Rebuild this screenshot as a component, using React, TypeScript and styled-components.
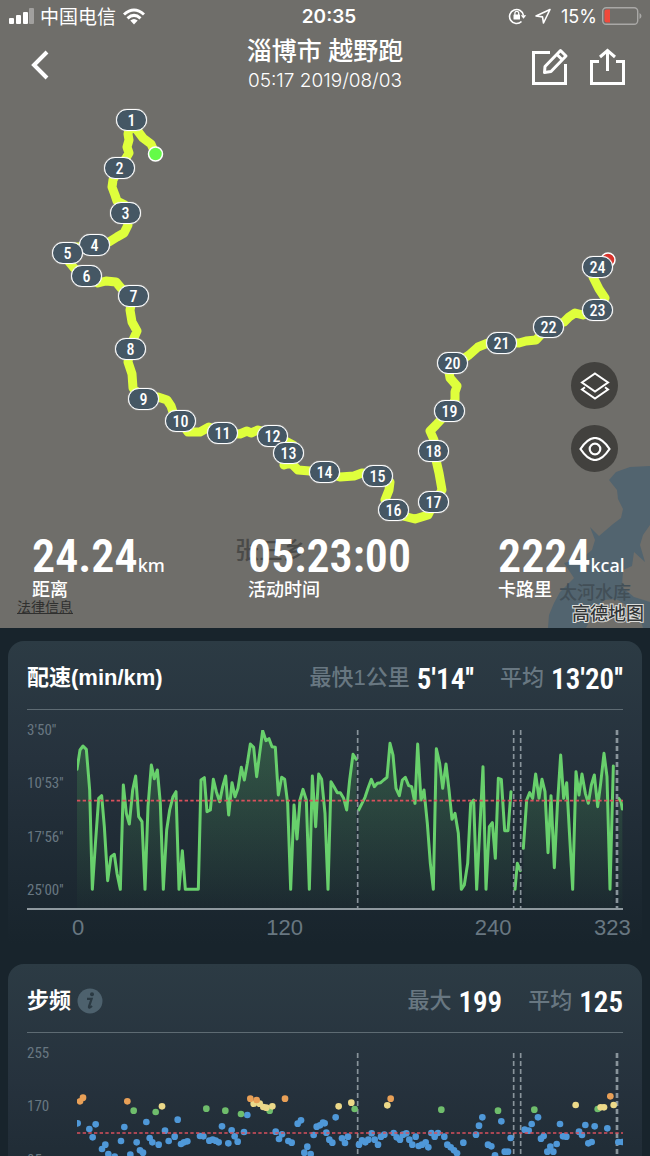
import React from 'react';
import styled, { createGlobalStyle } from 'styled-components';

const sans = `"Liberation Sans", "Noto Sans CJK SC", sans-serif`;
const ui = `Inter, "Noto Sans CJK SC", sans-serif`;
const digits = `"Roboto Condensed", Roboto, "Noto Sans CJK SC", sans-serif`;

const GlobalStyle = createGlobalStyle`
  * { box-sizing: border-box; }
  body { margin: 0; background: #18242c; }
  button { border: 0; padding: 0; background: none; color: inherit; font: inherit; cursor: pointer; }
`;

const Screen = styled.main`
  height: 100vh;
  overflow-y: auto;
  scrollbar-width: none;
  background: #18242c;
  color: #fff;
  font-family: ${ui};
`;

const MapSection = styled.section`
  position: relative;
  display: flex;
  flex-direction: column;
  min-height: 628px;
  overflow: hidden;
  background: #6f6e6a;
`;

const MapCanvas = styled.div`
  position: absolute;
  top: 0;
  left: 50%;
  width: 650px;
  height: 628px;
  margin-left: -325px;
`;

const MapDrawing = styled.svg`
  display: block;
  width: 100%;
  height: 100%;
`;

const Pin = styled.span<{ $x: number; $y: number }>`
  position: absolute;
  left: ${(p) => p.$x - 15}px;
  top: ${(p) => p.$y - 11}px;
  width: 31px;
  height: 22px;
  border: 1px solid #fff;
  border-radius: 11px;
  background: #455764;
  box-shadow: 0 0 1px #fff;
  text-align: center;
  font: 500 16px/21px ${digits};
`;

const Place = styled.span<{ $x: number; $y: number; $size: number; $color: string }>`
  position: absolute;
  left: ${(p) => p.$x}px;
  top: ${(p) => p.$y}px;
  color: ${(p) => p.$color};
  font-size: ${(p) => p.$size}px;
  line-height: 24px;
  font-weight: 500;
`;

const Foreground = styled.div`
  position: relative;
  display: flex;
  flex: 1;
  flex-direction: column;
`;

const StatusBar = styled.div`
  display: grid;
  grid-template-columns: 1fr auto 1fr;
  align-items: center;
  height: 32px;
  padding: 0 8px 0 9px;
  font-size: 18px;
`;

const StatusGroup = styled.div<{ $end?: boolean }>`
  display: flex;
  align-items: center;
  justify-content: ${(p) => (p.$end ? 'flex-end' : 'flex-start')};
  gap: ${(p) => (p.$end ? 5 : 6)}px;
`;

const Carrier = styled.span`
  padding-top: 3px;
  font-size: 19px;
  line-height: 24px;
`;

const Clock = styled.time`
  padding-left: 7px;
  font-size: 19px;
  font-weight: 600;
`;

const NavBar = styled.header`
  display: grid;
  grid-template-columns: 1fr auto 1fr;
  align-items: center;
  height: 66px;
  padding: 0 25px;
`;

const NavActions = styled.div`
  display: flex;
  justify-content: flex-end;
  gap: 20px;
  padding-top: 4px;
`;

const IconButton = styled.button`
  display: flex;
  justify-self: start;
  svg { display: block; }
`;

const Heading = styled.div`
  text-align: center;
`;

const Title = styled.h1`
  margin: 0;
  font-size: 25px;
  line-height: 32px;
  font-weight: 500;
`;

const Subtitle = styled.p`
  margin: 0;
  font-size: 19px;
  line-height: 28px;
  font-weight: 300;
`;

const MapControls = styled.div`
  display: flex;
  flex-direction: column;
  align-self: flex-end;
  gap: 16px;
  margin: auto 32px 60px 0;
`;

const RoundButton = styled.button`
  display: flex;
  align-items: center;
  justify-content: center;
  width: 47px;
  height: 47px;
  border-radius: 50%;
  background: #42413e;
`;

const Stats = styled.dl`
  display: grid;
  grid-template-columns: 216fr 250fr 152fr;
  margin: 0;
  padding-left: 32px;
`;

const Stat = styled.div`
  display: flex;
  flex-direction: column-reverse;
`;

const StatValue = styled.dd`
  margin: 0;
  white-space: nowrap;
  font: 600 46px/48px ${digits};
`;

const StatUnit = styled.small`
  font: 500 18px/20px "Noto Sans", sans-serif;
`;

const StatLabel = styled.dt`
  font-size: 18px;
  line-height: 20px;
  font-weight: 500;
`;

const MapFooter = styled.footer`
  display: flex;
  justify-content: space-between;
  height: 28px;
  padding: 0 6px 0 17px;
`;

const LegalLink = styled.a`
  color: #30302f;
  font-size: 14px;
  line-height: 14px;
`;

const MapBrand = styled.span`
  align-self: flex-end;
  color: #333637;
  font-size: 18px;
  line-height: 28px;
  font-weight: 500;
  -webkit-text-stroke: 2px #dededc;
  paint-order: stroke fill;
`;

const Cards = styled.div`
  display: flex;
  flex-direction: column;
  gap: 13px;
  padding: 13px 8px;
`;

const Card = styled.section`
  padding: 0 19px;
  height: 310px;
  border-radius: 16px;
  background: linear-gradient(#2c3b44, #26323d 38%, #18242c 98%);
`;

const CardHeader = styled.header`
  display: flex;
  align-items: center;
  height: 69px;
  padding-top: 5px;
  border-bottom: 1px solid #5e6b73;
`;

const CardTitle = styled.h2`
  margin: 0;
  font: bold 22px/32px ${sans};
`;

const InfoButton = styled.button`
  display: flex;
  margin-left: 6px;
`;

const Metrics = styled.dl`
  display: flex;
  gap: 26px;
  margin: 0 0 0 auto;
`;

const Metric = styled.div`
  display: flex;
  align-items: center;
  gap: 7px;
`;

const MetricLabel = styled.dt`
  color: #687781;
  font: 500 22px/32px ${sans};
`;

const MetricValue = styled.dd`
  margin: 0;
  padding-top: 2px;
  font: 600 29px/32px ${digits};
`;

const ChartBody = styled.div`
  display: flex;
  padding-top: 20px;
  border-bottom: 2px solid #8f999f;
`;

const YAxis = styled.div`
  display: flex;
  flex-direction: column;
  justify-content: space-between;
  width: 50px;
  height: 180px;
  margin-top: -10px;
  color: #687781;
  font: 15px/20px ${digits};
`;

const Plot = styled.svg`
  display: block;
  flex: 1;
  min-width: 0;
  height: 178px;
`;

const XAxis = styled.div`
  display: grid;
  grid-template-columns: 194fr 208fr 119fr 37px;
  margin-right: -8px;
  padding-left: 45px;
  color: #687781;
  font: 22px/36px ${sans};
`;

const pins: [number, number][] = [
  [131, 120], [119, 168], [125, 213], [94, 245], [67, 253], [86, 276], [133, 296], [130, 349],
  [143, 399], [180, 421], [222, 433], [272, 436], [288, 453], [324, 472], [377, 476], [393, 510],
  [433, 502], [433, 451], [449, 411], [452, 363], [501, 343], [548, 327], [597, 310], [597, 267],
];

const route =
  'M155 153 L151 144 L143 138 L137 130 L130 125 L128 134 L129 140 L127 147 L129 153 L126 158 L119 168 ' +
  'L113 180 L112 187 L115 195 L117 201 L125 205 L125 213 L128 225 L124 233 L117 237 L109 242 L94 246 L60 248 L66 258 L74 268 L86 276 ' +
  'L98 283 L106 281 L116 282 L121 288 L133 296 L130 310 L132 322 L137 331 L133 340 L130 349 ' +
  'L128 362 L132 374 L133 388 L143 399 L158 397 L167 400 L171 406 L173 412 L180 421 L188 432 L200 432 L209 427 ' +
  'L222 433 L240 434 L247 431 L251 433 L258 430 L272 434 L293 445 L288 453 L284 465 L291 463 L298 470 L310 471 L324 472 L340 477 L354 476 ' +
  'L362 473 L377 474 L390 482 L389 490 L385 500 L393 510 L403 516 L415 519 L428 515 L434 503 ' +
  'L442 490 L439 473 L436 460 L433 451 L434 440 L430 431 L436 425 L449 411 L455 400 L455 392 L457 386 L450 378 L449 372 ' +
  'L457 363 L469 355 L478 347 L488 343 L501 342 L519 343 L526 341 L536 340 L548 327 L564 322 L569 317 L575 313 L583 315 L597 311 ' +
  'L605 298 L599 289 L593 277 L597 267';

type Segment = { shift: number; points: string };

const paceSegments: Segment[] = [
  {
    shift: 0,
    points:
      '232,388 241,330 250,318 260,328 270,450 278,748 288,600 297,475 306,467 314,560 324,722 334,650 344,643 352,700 362,748 371,435 380,520 389,552 399,450 408,408 417,530 427,545 436,748 445,500 455,375 464,416 473,390 482,490 491,748 501,570 510,510 520,470 529,455 538,748 548,632 557,748 596,748 604,420 614,413 622,515 632,510 641,418 650,455 660,485 669,440 678,408 687,525 697,428 706,470 715,445 725,382 734,420 743,370 752,312 762,322 771,410 780,340 789,272 799,302 808,296 817,320 827,322 836,465 846,412 855,418 864,490 873,748 883,495 892,597 901,480 910,448 920,480 929,748 938,408 948,560 957,402 966,418 976,520 985,748 994,425 1003,440 1013,458 1022,458 1032,475 1041,510 1050,420 1060,343 1070,358',
  },
  {
    shift: 975,
    points:
      '102,510 112,490 121,472 130,445 140,418 149,440 158,430 168,428 177,420 187,412 196,310 205,345 214,445 224,467 233,420 242,412 252,437 261,440 271,490 279,312 289,480 298,450 308,550 317,670 326,748 335,326 345,370 354,445 364,372 373,450 382,538 391,520 401,580 410,748 419,735 429,670 438,490 447,480 456,748 475,380 484,748 494,560 503,548 512,655 521,415 530,418 540,572 550,572 559,455',
  },
  { shift: 975, points: '571,748 578,670 587,692' },
  {
    shift: 975,
    points:
      '596,625 606,480 615,458 624,475 633,402 643,475 652,418 661,455 670,638 679,467 689,683 698,500 708,345 717,475 726,428 735,590 744,748 754,395 763,465 772,402 782,460 791,490 800,435 809,405 819,500 828,430 838,340 847,410 856,748 866,378',
  },
  { shift: 975, points: '882,475 889,485 893,507' },
];

type DotSet = { color: string; left: string; right: string };

const cadenceDots: DotSet[] = [
  {
    color: '#4f98d8',
    left: '234,492 269,509 279,534 288,495 307,569 317,556 326,584 345,592 364,545 374,503 392,586 411,549 421,573 430,580 440,488 450,536 458,549 477,556 496,514 507,545 525,532 534,481 544,554 553,549 563,546 601,530 611,531 629,544 639,541 648,544 657,549 667,501 686,552 696,513 705,531 714,547 733,518 743,467 828,517 838,539 847,525 866,545 876,550 894,493 904,483 914,580 923,562 933,584 942,527 951,502 961,498 970,490',
    right: '0,492 5,520 14,541 23,550 33,474 52,537 61,551 70,532 103,556 112,543 122,549 131,541 141,522 150,541 160,556 169,532 179,526 207,521 216,534 226,541 235,526 245,522 254,541 263,556 273,532 282,560 292,556 303,549 311,564 320,521 330,532 340,521 359,532 368,556 378,564 388,573 397,582 416,550 454,526 463,499 473,474 490,556 500,561 511,588 530,486 540,577 550,577 558,536 600,511 612,514 621,494 640,474 649,538 657,530 668,577 677,562 686,577 696,554 706,494 715,531 725,532 763,517 772,527 782,497 791,552 801,548 810,501 848,507 881,548 893,548',
  },
  {
    color: '#6fbd6c',
    left: '402,454 468,458 620,448 677,454 724,464 810,454',
    right: '90,449 350,451 520,454 629,451 819,449',
  },
  {
    color: '#ecd989',
    left: '487,441 762,433 780,433 791,443 800,445 818,441',
    right: '42,441 80,430 188,438 753,437 828,444 838,444 867,437',
  },
  {
    color: '#e9a057',
    left: '241,426 250,415 383,426 752,418 771,422 856,418',
    right: '198,418 857,411',
  },
];

const pauses = [
  { x: 1074, width: 5 },
  { x: 1542, width: 5 },
  { x: 1563, width: 5 },
  { x: 1852, width: 8 },
];

const toPairs = (text: string, shift = 0) =>
  text.split(' ').map((pair) => {
    const [x, y] = pair.split(',').map(Number);
    return [x + shift, y] as [number, number];
  });

function PauseLines({ top }: { top: number }) {
  return (
    <>
      {pauses.map((p) => (
        <path key={p.x} d={`M${p.x} ${top}v534`} stroke="#89949b" strokeWidth={p.width} strokeDasharray="15 9" />
      ))}
    </>
  );
}

function Average({ y }: { y: number }) {
  return <path d={`M232 ${y}H1870`} stroke="#d9505c" strokeWidth="5" strokeDasharray="10 7" />;
}

function PacePlot() {
  return (
    <Plot viewBox="232 270 1638 534" preserveAspectRatio="none" role="img" aria-label="配速">
      <defs>
        <linearGradient id="pace" x1="0" y1="270" x2="0" y2="804" gradientUnits="userSpaceOnUse">
          <stop offset="0" stopColor="#4fae57" stopOpacity="0.3" />
          <stop offset="1" stopColor="#4fae57" stopOpacity="0.02" />
        </linearGradient>
      </defs>
      {paceSegments.map((s) => {
        const pts = toPairs(s.points, s.shift);
        const line = pts.map((p) => p.join(' ')).join('L');
        return (
          <g key={line}>
            <path d={`M${pts[0][0]} 804L${line}L${pts[pts.length - 1][0]} 804Z`} fill="url(#pace)" />
            <path d={`M${line}`} fill="none" stroke="#68d06c" strokeWidth="9" strokeLinejoin="round" strokeLinecap="round" />
          </g>
        );
      })}
      <PauseLines top={270} />
      <Average y={482} />
    </Plot>
  );
}

function CadencePlot() {
  return (
    <Plot viewBox="232 281 1638 534" preserveAspectRatio="none" role="img" aria-label="步频">
      <PauseLines top={281} />
      {cadenceDots.map((set) => (
        <g key={set.color} fill={set.color}>
          {[...toPairs(set.left), ...toPairs(set.right, 975)].map(([x, y]) => (
            <circle key={`${x}-${y}`} cx={x} cy={y} r="10" />
          ))}
        </g>
      ))}
      <Average y={521} />
    </Plot>
  );
}

type ChartCardProps = {
  title: string;
  info?: boolean;
  metrics: [string, string][];
  scale: string[];
  children: React.ReactNode;
};

function ChartCard({ title, info, metrics, scale, children }: ChartCardProps) {
  return (
    <Card>
      <CardHeader>
        <CardTitle>{title}</CardTitle>
        {info && (
          <InfoButton aria-label="说明">
            <svg width="26" height="26" viewBox="0 0 26 26">
              <circle cx="13" cy="13" r="12.5" fill="#4d616d" />
              <circle cx="15" cy="6.2" r="2" fill="#2a3942" />
              <path d="M10 10.800h4.600l-2.600 7.800q-.4 2.400 3-.6" fill="none" stroke="#2a3942" strokeWidth="2.200" />
            </svg>
          </InfoButton>
        )}
        <Metrics>
          {metrics.map(([label, value]) => (
            <Metric key={label}>
              <MetricLabel>{label}</MetricLabel>
              <MetricValue>{value}</MetricValue>
            </Metric>
          ))}
        </Metrics>
      </CardHeader>
      <ChartBody>
        <YAxis>
          {scale.map((s) => (
            <span key={s}>{s}</span>
          ))}
        </YAxis>
        {children}
      </ChartBody>
      <XAxis>
        {['0', '120', '240', '323'].map((s) => (
          <span key={s}>{s}</span>
        ))}
      </XAxis>
    </Card>
  );
}

export default function App() {
  return (
    <>
      <GlobalStyle />
      <Screen>
        <MapSection>
          <MapCanvas>
            <MapDrawing viewBox="0 0 650 628">
              <path
                d="M650 466 L630 467 L616 472 L609 480 L617 490 L618 499 L623 509 L621 518 L613 524 L599 536 L590 527 L595 540 L592 550 L582 558 L564 563 L574 578 L560 592 L554 603 L549 615 L548 628 H586 L594 612 L604 600 L616 599 L628 606 L640 617 L643 628 H650 V602 L634 597 L622 587 L623 570 L632 566 L634 552 L645 562 L640 545 L643 535 L650 525 Z"
                fill="#52646f"
              />
              <path d={route} fill="none" stroke="#dfff3c" strokeWidth="9" strokeLinejoin="round" strokeLinecap="round" />
              <circle cx="155.500" cy="154" r="7" fill="#64fb48" stroke="#fff" strokeWidth="1.500" />
              <circle cx="608" cy="260" r="7" fill="#d8332c" stroke="#fff" strokeWidth="1.500" />
            </MapDrawing>
            <Place $x={235} $y={539} $size={24} $color="#4a4a48">张三乡</Place>
            <Place $x={559} $y={581} $size={18} $color="#424f57">太河水库</Place>
            {pins.map(([x, y], i) => (
              <Pin key={i} $x={x} $y={y}>{i + 1}</Pin>
            ))}
          </MapCanvas>
          <Foreground>
            <StatusBar>
              <StatusGroup>
                <svg width="25" height="16" viewBox="0 0 25 16" fill="#fff">
                  <rect x="0" y="10" width="5" height="6" rx="1" />
                  <rect x="7" y="7" width="5" height="9" rx="1" />
                  <rect x="14" y="4" width="5" height="12" rx="1" />
                  <rect x="20" y="0" width="5" height="16" rx="1" opacity="0.35" />
                </svg>
                <Carrier>中国电信</Carrier>
                <svg width="24" height="17" viewBox="0 0 24 17" fill="none" stroke="#fff" strokeWidth="3">
                  <path d="M2 6.500Q12-2.500 22 6.500M5.500 10.300Q12 4.500 18.500 10.300" />
                  <path d="M12 16.500L8.300 12.600Q12 9.500 15.700 12.600Z" fill="#fff" stroke="none" />
                </svg>
              </StatusGroup>
              <Clock>20:35</Clock>
              <StatusGroup $end>
                <svg width="19" height="18" viewBox="0 0 19 18" fill="none" stroke="#fff" strokeWidth="1.600">
                  <path d="M13.500 14.500A7 7 0 1 1 15.500 8.500" />
                  <path d="M12.800 8.200h5.400l-2.700 3.600z" fill="#fff" stroke="none" />
                  <rect x="5.500" y="7.500" width="6.500" height="5" rx="0.500" fill="#fff" stroke="none" />
                  <path d="M6.900 8V6.300a1.900 1.900 0 0 1 3.800 0V8" strokeWidth="1.300" />
                </svg>
                <svg width="24" height="16" viewBox="0 0 24 16" fill="none" stroke="#fff" strokeWidth="1.600" strokeLinejoin="round">
                  <path d="M18 1.500L4 8l6.500 .900L11.500 15z" />
                </svg>
                <span>15%</span>
                <svg width="40" height="18" viewBox="0 0 40 18">
                  <rect x="0.700" y="0.700" width="35" height="16.600" rx="3.500" fill="none" stroke="#a9a8a6" strokeWidth="1.400" />
                  <path d="M4.500 2.500H8v13H4.500Q2.500 15.500 2.500 13.500v-9Q2.500 2.500 4.500 2.500Z" fill="#f0493b" />
                  <path d="M37.500 6v6q2-1 2-3t-2-3z" fill="#a9a8a6" />
                </svg>
              </StatusGroup>
            </StatusBar>
            <NavBar>
              <IconButton aria-label="返回">
                <svg width="27" height="30" viewBox="0 0 27 30" fill="none" stroke="#fff" strokeWidth="4">
                  <path d="M22 2L9 15l13 13" />
                </svg>
              </IconButton>
              <Heading>
                <Title>淄博市 越野跑</Title>
                <Subtitle>05:17 2019/08/03</Subtitle>
              </Heading>
              <NavActions>
                <IconButton aria-label="编辑">
                  <svg width="38" height="38" viewBox="0 0 38 38" fill="none" stroke="#fff" strokeWidth="3">
                    <path d="M19 4.500H2.500V35.500H34.500V16" />
                    <path d="M14 18.500L29.500 2.500l5.500 5.500L20 23.500l-6.500 1zM26 6.500l5.500 5.500" strokeLinejoin="round" />
                  </svg>
                </IconButton>
                <IconButton aria-label="分享">
                  <svg width="36" height="38" viewBox="0 0 36 38" fill="none" stroke="#fff" strokeWidth="3">
                    <path d="M10 13.500H2.500V35.500H34.500V13.500H27" />
                    <path d="M18.500 23V3M11 9L18.500 2.500l7.500 6.500" />
                  </svg>
                </IconButton>
              </NavActions>
            </NavBar>
            <MapControls>
              <RoundButton aria-label="图层">
                <svg width="30" height="28" viewBox="0 0 30 28" fill="none" stroke="#fff" strokeWidth="2">
                  <path d="M15 1.500L28 10.500 15 19.500 2 10.500z" />
                  <path d="M5 15.300L2 17.500 15 26.500 28 17.500 25 15.300" />
                </svg>
              </RoundButton>
              <RoundButton aria-label="显示">
                <svg width="32" height="24" viewBox="0 0 32 24" fill="none" stroke="#fff" strokeWidth="2.200">
                  <path d="M1.500 12Q16-10 30.500 12 16 34 1.500 12Z" />
                  <circle cx="16" cy="12" r="5.300" />
                </svg>
              </RoundButton>
            </MapControls>
            <Stats>
              <Stat>
                <StatLabel>距离</StatLabel>
                <StatValue>24.24<StatUnit>km</StatUnit></StatValue>
              </Stat>
              <Stat>
                <StatLabel>活动时间</StatLabel>
                <StatValue>05:23:00</StatValue>
              </Stat>
              <Stat>
                <StatLabel>卡路里</StatLabel>
                <StatValue>2224<StatUnit>kcal</StatUnit></StatValue>
              </Stat>
            </Stats>
            <MapFooter>
              <LegalLink href="#legal">法律信息</LegalLink>
              <MapBrand>高德地图</MapBrand>
            </MapFooter>
          </Foreground>
        </MapSection>
        <Cards>
          <ChartCard
            title="配速(min/km)"
            metrics={[['最快1公里', "5'14''"], ['平均', "13'20''"]]}
            scale={["3'50''", "10'53''", "17'56''", "25'00''"]}
          >
            <PacePlot />
          </ChartCard>
          <ChartCard
            title="步频"
            info
            metrics={[['最大', '199'], ['平均', '125']]}
            scale={['255', '170', '85', '0']}
          >
            <CadencePlot />
          </ChartCard>
        </Cards>
      </Screen>
    </>
  );
}
